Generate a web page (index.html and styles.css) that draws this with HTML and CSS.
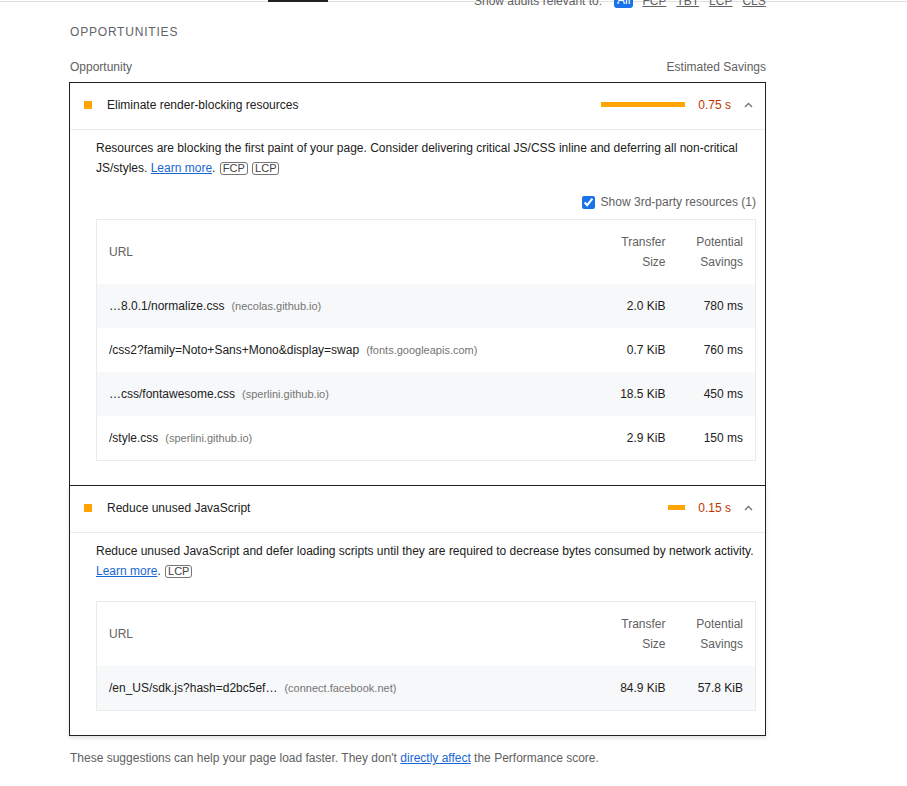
FILE: index.html
```html
<!DOCTYPE html>
<html lang="en">
<head>
<meta charset="utf-8">
<title>Opportunities</title>
<link rel="stylesheet" href="styles.css">
</head>
<body>
<div class="topstrip">
  <div class="tabmark"></div>
  <div class="filter">
    <span class="filter-label">Show audits relevant to:</span>
    <span class="chip chip-on">All</span>
    <span class="chip">FCP</span>
    <span class="chip">TBT</span>
    <span class="chip">LCP</span>
    <span class="chip">CLS</span>
  </div>
</div>

<main class="group">
  <h2 class="group-title">Opportunities</h2>
  <div class="group-cols">
    <span>Opportunity</span>
    <span>Estimated Savings</span>
  </div>

  <section class="card">
    <div class="card-head">
      <span class="sq"></span>
      <span class="title">Eliminate render-blocking resources</span>
      <span class="spark"><span class="spark-bar" style="width:84px"></span></span>
      <span class="value">0.75 s</span>
      <svg class="chev" width="9" height="6" viewBox="0 0 9 6"><polyline points="1,5 4.5,1.5 8,5" fill="none" stroke="#757575" stroke-width="1.4"/></svg>
    </div>
    <div class="card-body">
      <p class="desc">Resources are blocking the first paint of your page. Consider delivering critical JS/CSS inline and deferring all non-critical JS/styles. <a href="#">Learn more</a>. <span class="badge">FCP</span> <span class="badge">LCP</span></p>
      <label class="third">
        <input type="checkbox" checked>
        <span>Show 3rd-party resources (1)</span>
      </label>
      <table class="tbl">
        <colgroup><col><col class="c-num"><col class="c-num"></colgroup>
        <thead>
          <tr><th class="l">URL</th><th>Transfer Size</th><th>Potential Savings</th></tr>
        </thead>
        <tbody>
          <tr><td class="l">…8.0.1/normalize.css<span class="host">(necolas.github.io)</span></td><td>2.0 KiB</td><td>780 ms</td></tr>
          <tr><td class="l">/css2?family=Noto+Sans+Mono&amp;display=swap<span class="host">(fonts.googleapis.com)</span></td><td>0.7 KiB</td><td>760 ms</td></tr>
          <tr><td class="l">…css/fontawesome.css<span class="host">(sperlini.github.io)</span></td><td>18.5 KiB</td><td>450 ms</td></tr>
          <tr><td class="l">/style.css<span class="host">(sperlini.github.io)</span></td><td>2.9 KiB</td><td>150 ms</td></tr>
        </tbody>
      </table>
    </div>
  </section>

  <section class="card card-last">
    <div class="card-head">
      <span class="sq"></span>
      <span class="title">Reduce unused JavaScript</span>
      <span class="spark"><span class="spark-bar" style="width:17px"></span></span>
      <span class="value">0.15 s</span>
      <svg class="chev" width="9" height="6" viewBox="0 0 9 6"><polyline points="1,5 4.5,1.5 8,5" fill="none" stroke="#757575" stroke-width="1.4"/></svg>
    </div>
    <div class="card-body">
      <p class="desc">Reduce unused JavaScript and defer loading scripts until they are required to decrease bytes consumed by network activity. <a href="#">Learn more</a>. <span class="badge">LCP</span></p>
      <table class="tbl tbl-2">
        <colgroup><col><col class="c-num"><col class="c-num"></colgroup>
        <thead>
          <tr><th class="l">URL</th><th>Transfer Size</th><th>Potential Savings</th></tr>
        </thead>
        <tbody>
          <tr><td class="l">/en_US/sdk.js?hash=d2bc5ef…<span class="host">(connect.facebook.net)</span></td><td>84.9 KiB</td><td>57.8 KiB</td></tr>
        </tbody>
      </table>
    </div>
  </section>

  <p class="footnote">These suggestions can help your page load faster. They don't <a href="#">directly affect</a> the Performance score.</p>
</main>
</body>
</html>
```

FILE: styles.css
```css
* { box-sizing: border-box; }

html, body {
  margin: 0;
  padding: 0;
  background: #fff;
}

body {
  font-family: "Liberation Sans", Arial, sans-serif;
  font-size: 12px;
  line-height: 20px;
  color: #212121;
}

a { color: #1967d2; text-decoration: underline; }

/* top strip (scrolled-off filter bar) */
.topstrip {
  height: 8px;
  overflow: hidden;
  display: flex;
  background: linear-gradient(#e0e0e0, #e0e0e0) 0 1px / 100% 1px no-repeat;
}
.tabmark {
  width: 60px;
  height: 2px;
  margin-left: 268px;
  background: #202124;
  flex: none;
}
.filter {
  margin-left: 146px;
  align-self: flex-end;
  display: flex;
  align-items: flex-end;
  font-size: 12px;
  line-height: 14px;
  color: #616161;
  white-space: nowrap;
}
.filter-label { padding-bottom: 0; margin-right: 12px; }
.chip {
  padding: 0 1px;
  margin-right: 8px;
  text-decoration: underline;
}
.chip-on {
  background: #1a73e8;
  color: #fff;
  border-radius: 3px;
  padding: 0 3px 1px;
  text-decoration: none;
}

/* group */
.group {
  margin-left: 69px;
  width: 697px;
}
.group-title {
  margin: 14px 0 0;
  font-size: 12px;
  font-weight: normal;
  line-height: 20px;
  letter-spacing: 0.8px;
  text-transform: uppercase;
  color: #5f6368;
  padding-left: 1px;
}
.group-cols {
  display: flex;
  justify-content: space-between;
  margin-top: 15px;
  margin-bottom: 5px;
  padding-left: 1px;
  color: #616161;
}

/* cards */
.card {
  border: 1px solid #202124;
  background: #fff;
}
.card + .card { border-top: 0; }
.card-last { box-shadow: 0 2px 4px rgba(0, 0, 0, 0.12); }

.card-head {
  display: flex;
  align-items: center;
  height: 47px;
  padding: 0 12px 3px 14px;
  border-bottom: 1px solid #ebebeb;
}
.sq {
  width: 8px;
  height: 8px;
  background: #ffa400;
  margin-right: 15px;
  flex: none;
}
.title { flex: 1; color: #212121; }
.spark {
  width: 84px;
  display: flex;
  justify-content: flex-end;
}
.spark-bar {
  height: 5px;
  background: #ffa400;
}
.value {
  margin-left: 13px;
  color: #c33300;
}
.chev {
  margin-left: 13px;
  flex: none;
}

.card-body {
  padding: 8px 9px 24px 26px;
}
.desc {
  margin: 0;
  line-height: 20px;
  color: #212121;
}
.badge {
  display: inline-block;
  border: 1px solid #757575;
  border-radius: 3px;
  padding: 0 2px;
  font-size: 11px;
  line-height: 11px;
  color: #424242;
  margin-left: 1px;
}

.third {
  display: flex;
  justify-content: flex-end;
  align-items: center;
  gap: 6px;
  margin-top: 14px;
  margin-bottom: 7px;
  color: #616161;
}
.third input {
  margin: 0;
  width: 13px;
  height: 13px;
  accent-color: #1a73e8;
}

/* tables */
.tbl {
  width: 100%;
  border-collapse: collapse;
  table-layout: fixed;
  border: 1px solid #ebebeb;
}
.tbl-2 { margin-top: 20px; }
.c-num { width: 78px; }
.tbl th,
.tbl td {
  padding: 12px;
  line-height: 20px;
  text-align: right;
  vertical-align: middle;
  font-size: 12px;
  white-space: normal;
}
.tbl th {
  font-weight: normal;
  color: #616161;
}
.tbl td { color: #212121; }
.tbl .l { text-align: left; }
.tbl td.l { white-space: nowrap; overflow: hidden; }
.tbl tbody tr:nth-child(odd) { background: #f7f8f9; }
.host {
  margin-left: 7px;
  font-size: 11px;
  color: #757575;
}

.footnote {
  margin: 12px 0 0;
  padding-left: 1px;
  color: #616161;
}
```
